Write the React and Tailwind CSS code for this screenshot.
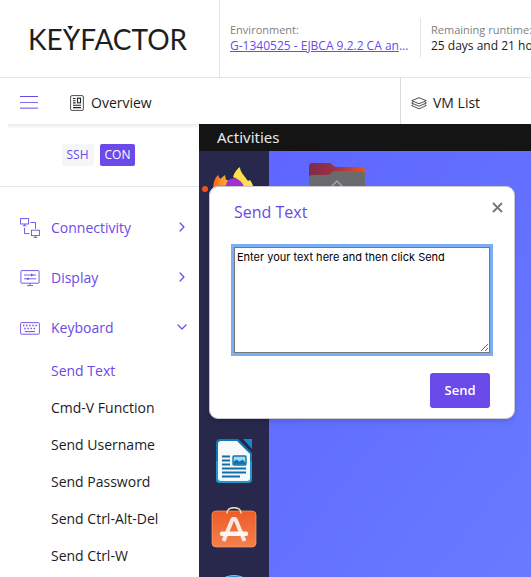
import React from "react";
import { ChevronDown, ChevronRight } from "lucide-react";

const keyboardItems = [
  "Send Text",
  "Cmd-V Function",
  "Send Username",
  "Send Password",
  "Send Ctrl-Alt-Del",
  "Send Ctrl-W",
];

function Logo() {
  return (
    <div className="relative font-['Lato',sans-serif] text-[28px] leading-8 text-[#1e1e1e]">
      KEYFACTOR
      <svg className="absolute left-[39px] top-[3px]" width="7" height="6" viewBox="0 0 7 6" aria-hidden="true">
        <path d="M0.4 0h5.6L3.2 4.2z" fill="#1e1e1e" />
      </svg>
    </div>
  );
}

function DocumentIcon() {
  return (
    <svg width="14" height="16" viewBox="0 0 14 16" fill="none" stroke="#222" aria-hidden="true">
      <rect x="0.6" y="0.6" width="12.8" height="14.8" rx="1.4" strokeWidth="0.8" />
      <rect x="7.5" y="3.2" width="3" height="4.6" strokeWidth="1.1" />
      <path d="M3 3.5h2.6M3 5.7h2.6M3 7.9h2.6M3 10.3h8M3 12.6h8" strokeWidth="1.1" />
    </svg>
  );
}

function LayersIcon() {
  return (
    <svg width="16" height="13" viewBox="0 0 16 13" fill="none" stroke="#222" strokeWidth="0.8" strokeLinejoin="round" aria-hidden="true">
      <path d="M8 0.7l7.3 3L8 6.7 0.7 3.7z" />
      <path d="M2.2 5.2L0.7 6 8 9.2l7.3-3.2-1.5-0.8" />
      <path d="M2.2 7.7L0.7 8.5 8 11.8l7.3-3.3-1.5-0.8" />
    </svg>
  );
}

function ConnectivityIcon() {
  return (
    <svg width="20" height="20" viewBox="0 0 20 20" fill="none" stroke="#6a4ae8" strokeWidth="0.9" aria-hidden="true">
      <rect x="0.6" y="0.6" width="8" height="5.4" />
      <path d="M4.6 6v1.6M2.8 7.8h3.6M10.5 4.5h5v6.4M4.5 9.8v5.8h5" />
      <rect x="11.4" y="12.2" width="8" height="5.4" />
      <path d="M15.4 17.6v1.6M13.6 19.4h3.6" />
    </svg>
  );
}

function DisplayIcon() {
  return (
    <svg width="20" height="17" viewBox="0 0 20 17" fill="none" stroke="#6a4ae8" strokeWidth="0.9" aria-hidden="true">
      <rect x="0.9" y="0.6" width="18.2" height="12.6" rx="0.6" />
      <path d="M4 5h12M4 8.8h12M10 13.2v2M7 15.6h6" />
      <path d="M11 3.6l2.6 1.4-2.6 1.4zM8.6 7.4L6 8.8l2.6 1.4z" fill="#6a4ae8" stroke="none" />
    </svg>
  );
}

function KeyboardIcon() {
  return (
    <svg width="20" height="13" viewBox="0 0 20 13" fill="none" stroke="#6a4ae8" aria-hidden="true">
      <rect x="0.6" y="0.6" width="18.8" height="11.6" rx="0.9" strokeWidth="0.9" />
      <path d="M3 3.5h14" strokeWidth="1.3" strokeDasharray="1.4 1.7" />
      <path d="M4.3 6.5h12" strokeWidth="1.3" strokeDasharray="1.4 1.7" />
      <path d="M5 9.6h10" strokeWidth="1" />
    </svg>
  );
}

function MenuSection({ icon, label, open }) {
  const Chevron = open ? ChevronDown : ChevronRight;
  return (
    <button type="button" aria-expanded={!!open} className="flex h-[50px] w-full items-center pl-5 pr-[9px] text-[#6a4ae8]">
      <span className="w-[31px]">{icon}</span>
      <span className="flex-1 text-left text-sm">{label}</span>
      <Chevron size={16} strokeWidth={1.8} className="-mt-[3px]" />
    </button>
  );
}

function Sidebar() {
  return (
    <aside className="w-[199px] shrink-0 overflow-hidden bg-white">
      <div className="flex h-[63px] justify-center gap-[6px] border-b border-[#e6e6e6] pr-[2px] pt-5 text-xs">
        <button type="button" className="h-[22px] rounded-xs bg-[#f4f6f7] px-[5px] text-[#6a4ae8]">SSH</button>
        <button type="button" className="h-[22px] rounded-xs bg-[#6a4ae8] px-[5px] text-white">CON</button>
      </div>
      <nav className="pt-4">
        <MenuSection icon={<ConnectivityIcon />} label="Connectivity" />
        <MenuSection icon={<DisplayIcon />} label="Display" />
        <MenuSection icon={<KeyboardIcon />} label="Keyboard" open />
        <ul className="-mt-px text-sm">
          {keyboardItems.map((item, i) => (
            <li key={item}>
              <a href="#" className={`flex h-[37px] items-center pl-[51px] ${i === 0 ? "text-[#6a4ae8]" : "text-[#1c1c1c]"}`}>
                {item}
              </a>
            </li>
          ))}
        </ul>
      </nav>
    </aside>
  );
}

function FirefoxIcon() {
  return (
    <svg className="shrink-0" width="44" height="44" viewBox="0 0 44 44" aria-hidden="true">
      <defs>
        <linearGradient id="ffFlame" x1="0" x2="1" y1="0.4" y2="0.5">
          <stop offset="0" stopColor="#ff5a22" />
          <stop offset="0.45" stopColor="#ff9a28" />
          <stop offset="1" stopColor="#ffe14a" />
        </linearGradient>
      </defs>
      <path d="M1 24C1 17 2 12 6 8l2 4 5-4 1 5 8 1v12z" fill="url(#ffFlame)" />
      <path d="M1 20c8-3 30-3 41 0v6a20 18 0 01-41 0z" fill="url(#ffFlame)" />
      <path d="M14 18c1-6 6-8 12-6 4 1 7 4 7 8H22l-4 3-6-1z" fill="#a12fd0" />
      <path d="M21 10c1-4 4-8 7-10 0 5 4 8 8 14l2-1c3 4 4 8 4 12H32c1-8-3-12-11-15z" fill="#ffe04a" />
    </svg>
  );
}

function WriterIcon() {
  return (
    <svg className="shrink-0" width="44" height="44" viewBox="0 0 44 44" aria-hidden="true">
      <path d="M8 0h18l14 14v26a4 4 0 01-4 4H8a4 4 0 01-4-4V4a4 4 0 014-4z" fill="#0e7ab4" />
      <path d="M4 22h36v18a4 4 0 01-4 4H8a4 4 0 01-4-4z" fill="#1d98cf" />
      <path d="M9 2h16l13 13v24a3 3 0 01-3 3H9a3 3 0 01-3-3V5a3 3 0 013-3z" fill="#f8f9fa" />
      <path d="M31 0h9v10z" fill="#1489c3" />
      <path d="M10 17.5h8M10 21.5h8M10 25.5h8M10 29.5h24M10 33.5h24M10 37.5h18" stroke="#0d6fae" strokeWidth="2" />
      <rect x="21" y="17" width="13" height="9" rx="1" fill="#a4daf5" stroke="#1275ae" strokeWidth="1.4" />
      <path d="M21.5 25.5v-3l3-2 3 2 3-2 3 3v2z" fill="#1275ae" />
    </svg>
  );
}

function SoftwareIcon() {
  return (
    <svg className="shrink-0" width="46" height="44" viewBox="0 0 46 44" aria-hidden="true">
      <defs>
        <linearGradient id="bag" x1="0" x2="0" y1="0" y2="1">
          <stop offset="0" stopColor="#ee5c28" />
          <stop offset="0.55" stopColor="#f0703d" />
          <stop offset="1" stopColor="#f4814e" />
        </linearGradient>
      </defs>
      <rect x="1" y="4" width="44" height="36" rx="4" fill="url(#bag)" stroke="#f6a06f" strokeWidth="0.7" />
      <path d="M16 6C16 -1.100 30 -1.100 30 6" fill="none" stroke="#f7d7a0" strokeWidth="1.6" strokeLinecap="round" />
      <path d="M12.5 34L21.6 12h2.8L33.5 34" fill="none" stroke="#f7e9e3" strokeWidth="4" strokeLinejoin="bevel" />
      <path d="M11 26.8h24" stroke="#fff6f0" strokeWidth="4.4" strokeLinecap="round" />
    </svg>
  );
}

function HelpIcon() {
  return (
    <svg className="shrink-0" width="44" height="44" viewBox="0 0 44 44" aria-hidden="true">
      <circle cx="22" cy="22" r="21.5" fill="#2288ce" stroke="#84c6ef" />
    </svg>
  );
}

function FolderIcon() {
  return (
    <svg width="56" height="50" viewBox="0 0 56 50" aria-hidden="true">
      <defs>
        <linearGradient id="folderBack" x1="0" x2="1" y1="0" y2="0">
          <stop offset="0" stopColor="#7d2b4d" />
          <stop offset="0.5" stopColor="#a03340" />
          <stop offset="1" stopColor="#e9541f" />
        </linearGradient>
      </defs>
      <path d="M4 0h17c2 0 3 4 6 4h25c3 0 4 1 4 4v38H0V4c0-3 1-4 4-4z" fill="url(#folderBack)" />
      <path d="M4 12h14c5 0 4-4 9-4h25c3 0 4 1 4 4v38H0V16c0-3 1-4 4-4z" fill="#6b6b6e" />
      <path d="M22 24l6-6 6 6M32 22.500v1.500" fill="none" stroke="#a9a9a9" strokeWidth="1.3" />
    </svg>
  );
}

function SendTextDialog() {
  return (
    <section
      role="dialog"
      aria-labelledby="send-text-title"
      className="absolute left-[10px] top-[62px] w-[306px] rounded-[9px] border border-[#c9c9cf] bg-white px-[24px] pb-[10px] pt-[13px] shadow-md"
    >
      <div className="flex h-[47px] items-start justify-between">
        <h2 id="send-text-title" className="text-base text-[#6a4ae8]">Send Text</h2>
        <button type="button" aria-label="Close" className="-mr-[13px] mt-[2px]">
          <svg width="11" height="11" viewBox="0 0 11 11" aria-hidden="true">
            <path d="M1 1l9 9M10 1l-9 9" stroke="#777" strokeWidth="1.9" />
          </svg>
        </button>
      </div>
      <textarea
        aria-label="Text to send"
        defaultValue="Enter your text here and then click Send"
        className="block h-[106px] w-full border border-[#777] bg-white px-[2px] py-px font-['Inter',sans-serif] text-[11px] leading-4 text-black outline-3 outline-[#7badf5]"
      />
      <div className="flex justify-end pt-5">
        <button type="button" className="h-[35px] w-[60px] rounded-[3px] bg-[#6a4ae8] text-[13px] font-semibold text-white">Send</button>
      </div>
    </section>
  );
}

function RemoteDesktop() {
  return (
    <main className="relative flex min-w-0 flex-1 flex-col">
      <div className="flex h-[27px] shrink-0 items-center bg-[#141414] pl-[18px] font-['Noto_Sans',sans-serif] text-[15px] text-[#e8e8e8]">
        Activities
      </div>
      <div className="flex min-h-0 flex-1 overflow-hidden bg-linear-to-br from-[#5d63ff] to-[#697bff]">
        <div className="relative flex w-[70px] shrink-0 flex-col items-center gap-6 bg-[#27284c] pt-4">
          <FirefoxIcon />
          <div className="h-[180px] shrink-0" />
          <WriterIcon />
          <SoftwareIcon />
          <HelpIcon />
          <span className="absolute left-[3px] top-[35px] size-[6px] rounded-full bg-[#e95420]" />
        </div>
        <div className="pl-10 pt-3">
          <FolderIcon />
        </div>
      </div>
      <SendTextDialog />
    </main>
  );
}

export default function App() {
  return (
    <div className="flex h-screen flex-col overflow-hidden bg-white font-['Open_Sans','Noto_Sans',sans-serif] text-[#1c1c1c]">
      <header className="flex h-[78px] shrink-0 border-b border-[#e4e4e4]">
        <div className="flex w-[220px] shrink-0 items-center border-r border-[#e4e4e4] pl-[28px]">
          <Logo />
        </div>
        <div className="flex min-w-0 flex-1 items-center overflow-hidden pb-[2px] pl-[10px] text-xs leading-4">
          <div className="w-[190px] shrink-0">
            <div className="text-[11px] text-[#808080]">Environment:</div>
            <div className="whitespace-nowrap text-[#6a4ae8]">
              <a href="#" className="underline">G-1340525 - EJBCA 9.2.2 CA an</a>...
            </div>
          </div>
          <div className="flex h-[39px] shrink-0 flex-col justify-center whitespace-nowrap border-l border-[#e4e4e4] pl-[10px]">
            <div className="text-[11px] text-[#808080]">Remaining runtime:</div>
            <div>25 days and 21 hours</div>
          </div>
        </div>
      </header>
      <nav className="z-10 flex h-[46px] shrink-0 text-sm">
        <div className="flex w-[400px] shrink-0 items-center pl-5 pt-1">
          <button type="button" aria-label="Menu" className="mr-8">
            <svg width="18" height="14" viewBox="0 0 18 14" aria-hidden="true">
              <path d="M0 0.5h18" stroke="#6a4ae8" />
              <path d="M0 6.5h18" stroke="#8369ed" />
              <path d="M0 12.2h18" stroke="#9f8bf1" strokeWidth="1.6" />
            </svg>
          </button>
          <a href="#" className="flex items-center gap-[7px]"><DocumentIcon />Overview</a>
        </div>
        <a href="#" className="flex flex-1 items-center gap-[6px] border-l border-[#dcdcdc] pl-[10px] pt-1"><LayersIcon />VM List</a>
      </nav>
      <div className="flex min-h-0 flex-1">
        <div className="relative flex shrink-0">
          <Sidebar />
          <div className="absolute inset-x-0 top-0 ml-2 h-[5px] bg-linear-to-b from-[#ebebeb] to-transparent" />
        </div>
        <RemoteDesktop />
      </div>
    </div>
  );
}
